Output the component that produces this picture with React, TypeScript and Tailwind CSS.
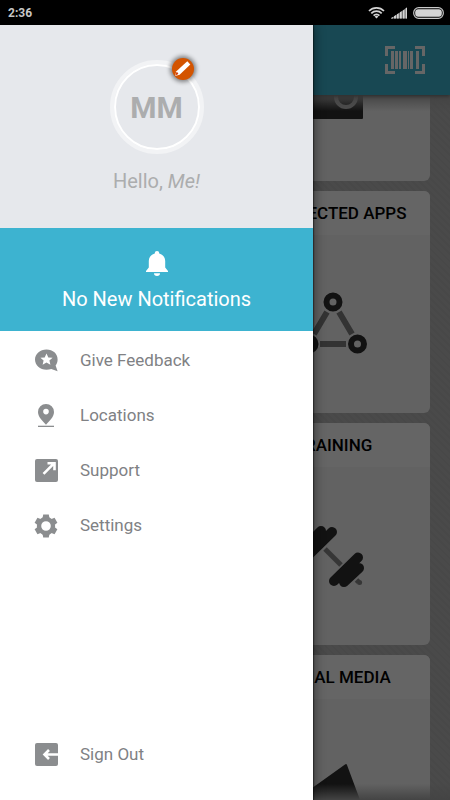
import type { ReactNode } from "react";

const gearTeeth = [0, 60, 120, 180, 240, 300];

const WifiIcon = () => (
  <svg width="17" height="13" viewBox="0 0 17 13" fill="none" stroke="#d4d4d4" strokeWidth="1.7">
    <path d="M1 5a10.5 10.5 0 0 1 15 0M3.3 7.4a7.2 7.2 0 0 1 10.4 0M5.6 9.6a4 4 0 0 1 5.8 0" />
    <path d="M8.5 12.6l-1.9-2a2.7 2.7 0 0 1 3.8 0z" fill="#d4d4d4" stroke="none" />
  </svg>
);

const SignalIcon = () => (
  <svg width="16" height="12" viewBox="0 0 16 12">
    <path d="M0 11.5L16 0.5v11z" fill="#777" />
    <path d="M0 11.5v-.5l2-1v1.5zM3 11.5V9.3l2-1.2v3.4zM6 11.5V7.3l1.7-1v5.2zM9 11.5V5.3l1.7-1v7.2zM12 11.5v-8l1.5-1v9zM14.7 11.5V1.3L16 .5v11z" fill="#d4d4d4" />
  </svg>
);

const BatteryIcon = () => (
  <svg width="31" height="12" viewBox="0 0 31 12">
    <rect x="0.7" y="0.7" width="29.6" height="10.6" rx="5" fill="none" stroke="#c8c8c8" strokeWidth="1.2" />
    <rect x="2.2" y="2.2" width="26.6" height="7.6" rx="3" fill="#d4d4d4" />
  </svg>
);

const BarcodeIcon = () => (
  <svg width="40" height="28" viewBox="0 0 40 28" fill="#fff">
    <path d="M0 0h10v3H3v7H0zM30 0h10v10h-3V3h-7zM0 18h3v7h7v3H0zM37 18h3v10H30v-3h7z" />
    <path d="M6 5h3v18H6zM10 5h3v18h-3zM14 5h2v18h-2zM18 5h4v18h-4zM23 5h1v18h-1zM25 5h3v18h-3zM31 5h3v18h-3z" />
  </svg>
);

const PencilIcon = () => (
  <svg width="22" height="22" viewBox="0 0 22 22">
    <path d="M4.4 13.2L15.3 3.3l3 3.3L7.6 16.8 3 18z" fill="#fff" />
    <path d="M4.2 14.2l1.6.2.5 1.6-3 1.8z" fill="#d3410c" />
  </svg>
);

const BellIcon = () => (
  <svg width="24" height="26" viewBox="0 0 24 26" fill="#fff">
    <path d="M12 1a2.2 2.2 0 0 1 2.2 2.4c3.5 1 6 4 6 7.6v6.6L23 21v1H1v-1l2.8-3.4V11c0-3.6 2.5-6.6 6-7.6A2.2 2.2 0 0 1 12 1z" />
    <path d="M9 23.2h6a3 2.8 0 0 1-6 0z" />
  </svg>
);

const FeedbackIcon = () => (
  <svg width="24" height="24" viewBox="0 0 24 24" fill="#8b8d8f">
    <path d="M12.5 0.5C19 0.5 23.6 4.8 23.6 10.4c0 2.3-.7 4.3-2 6l2 5.9-6.3-2.3c-1.5.6-3.1.8-4.8.8C6 20.8 1 16.200 1 10.6S6 .5 12.5.5z" />
    <path d="M12.5 4.4l1.800 4 4.300.4-3.200 2.800 1 4.200-3.900-2.200-3.900 2.200 1-4.200-3.200-2.800 4.300-.4z" fill="#fff" />
  </svg>
);

const PinIcon = () => (
  <svg width="24" height="24" viewBox="0 0 24 24" fill="#8b8d8f">
    <path fillRule="evenodd" d="M12 0a8 8 0 0 1 8 8c0 5-4.5 9-8 12.7C8.5 17 4 13 4 8a8 8 0 0 1 8-8zm0 4.8a2.800 2.800 0 1 0 0 5.600 2.800 2.800 0 0 0 0-5.600z" />
    <path d="M4 21.700h16V23H4z" />
  </svg>
);

const SupportIcon = () => (
  <svg width="24" height="24" viewBox="0 0 24 24">
    <rect x="1" y="0" width="23" height="23" rx="2" fill="#8b8d8f" />
    <path d="M9.500 14.800L20 4.300M13.500 4.300h7v7" fill="none" stroke="#fff" strokeWidth="2.600" />
  </svg>
);

const GearIcon = () => (
  <svg width="24" height="24" viewBox="-12 -12 24 24">
    {gearTeeth.map((angle) => (
      <path key={angle} d="M-2.800-11.500h5.600l.8 4.500h-7.200z" fill="#8b8d8f" transform={`rotate(${angle})`} />
    ))}
    <circle r="7" fill="none" stroke="#8b8d8f" strokeWidth="4.400" />
  </svg>
);

const SignOutIcon = () => (
  <svg width="24" height="24" viewBox="0 0 24 24">
    <rect x="1" y="0" width="23" height="23" rx="2" fill="#8b8d8f" />
    <path d="M24 11.500H10.500M15 7l-4.500 4.500L15 16" fill="none" stroke="#fff" strokeWidth="2.600" />
  </svg>
);

const CameraArt = () => (
  <svg width="65" height="64" viewBox="0 0 65 64">
    <rect x="3" y="5" width="59" height="54" rx="1" fill="#2e2e2e" />
    <circle cx="45" cy="37" r="10" fill="#2e2e2e" stroke="#c0c0c0" strokeWidth="4" />
  </svg>
);

const NetworkArt = () => (
  <svg width="65" height="64" viewBox="0 0 65 64" fill="none" overflow="visible">
    <path d="M38 20l13 22M26 20L13 42M19 52h26" stroke="#808080" strokeWidth="6" />
    <g stroke="#2e2e2e" strokeWidth="6">
      <circle cx="32" cy="10" r="6.500" />
      <circle cx="56.500" cy="52" r="6.500" />
      <circle cx="8" cy="52" r="6.500" />
    </g>
  </svg>
);

const DumbbellArt = () => (
  <svg width="65" height="64" viewBox="0 0 65 64" fill="none">
    <path d="M24 25l16 16" stroke="#888" strokeWidth="5" />
    <path d="M55.500 56l2 2" stroke="#888" strokeWidth="5" />
    <path d="M58.500 58.500h.1" stroke="#888" strokeWidth="5" strokeLinecap="round" />
    <g stroke="#2e2e2e" strokeWidth="10" strokeLinecap="round">
      <path d="M33 57l24-23.500M43 58l15-14" />
      <path d="M31 8L7 31.500M20 7L6 21" />
    </g>
    <path d="M37 55l18-17 2 6-14 13zM27 10L8 29V20L20 9z" fill="#2e2e2e" />
  </svg>
);

const MegaphoneArt = () => (
  <svg width="65" height="64" viewBox="0 0 65 64">
    <path d="M44 8.500q1.500-1 2 .5L65 60H0V40z" fill="#2e2e2e" />
  </svg>
);

const cards = [
  { id: "camera", title: "", art: <CameraArt /> },
  { id: "apps", title: "CONNECTED APPS", art: <NetworkArt /> },
  { id: "training", title: "TRAINING", art: <DumbbellArt /> },
  { id: "social", title: "SOCIAL MEDIA", art: <MegaphoneArt /> },
];

const menu = [
  { label: "Give Feedback", icon: <FeedbackIcon /> },
  { label: "Locations", icon: <PinIcon /> },
  { label: "Support", icon: <SupportIcon /> },
  { label: "Settings", icon: <GearIcon /> },
];

function MenuLink({ icon, label }: { icon: ReactNode; label: string }) {
  return (
    <a href="#" className="flex h-[55px] items-center gap-[22px] pl-[34px] text-[17px] text-[#808184]">
      {icon}
      {label}
    </a>
  );
}

export default function App() {
  return (
    <div className="flex h-screen flex-col overflow-hidden bg-black font-['Roboto',sans-serif]">
      {/* Status bar */}
      <div className="flex h-[25px] shrink-0 items-center justify-between bg-black pl-2 pr-[6px]">
        <span className="text-[12px] font-bold text-[#c8c8c8]">2:36</span>
        <div className="flex items-center gap-[6px]">
          <WifiIcon />
          <SignalIcon />
          <BatteryIcon />
        </div>
      </div>

      <div className="relative flex min-h-0 flex-1 flex-col">
        {/* Page under the drawer */}
        <header className="z-10 flex h-[70px] shrink-0 items-center justify-end bg-[#3db3d0] pr-[25px] shadow-[0_1px_4px_rgba(0,0,0,0.4)]">
          <button aria-label="Scan barcode">
            <BarcodeIcon />
          </button>
        </header>
        <main className="relative min-h-0 flex-1 overflow-hidden bg-[repeating-linear-gradient(45deg,#b8b8b8_0px,#b8b8b8_3px,#b4b4b4_3px,#b4b4b4_5px)]">
          {/* Scrolled part way down */}
          <div className="-mt-[136px] grid grid-cols-2 gap-x-6 gap-y-[10px] px-5">
            {cards.map((card) => (
              <button key={card.id} className="col-start-2 flex h-[222px] flex-col overflow-hidden rounded-md bg-[#f4f4f4]">
                <span className="flex h-11 w-full shrink-0 items-center justify-center whitespace-nowrap bg-[#fcfcfc] pt-0.5 text-[17px] font-medium text-black">
                  {card.title}
                </span>
                <span className="flex w-full flex-1 items-center justify-center">{card.art}</span>
              </button>
            ))}
          </div>
          {/* Fading edges of the scroll area */}
          <div className="absolute inset-x-0 top-0 h-4 bg-gradient-to-b from-[#aaaaaa] to-transparent" />
          <div className="absolute inset-x-0 bottom-0 h-4 bg-gradient-to-b from-transparent to-[#aaaaaa]" />
        </main>

        {/* Scrim */}
        <div className="absolute inset-0 z-20 bg-black/60" />

        {/* Drawer */}
        <aside className="absolute inset-y-0 left-0 z-30 flex w-[313px] flex-col bg-white shadow-[1px_0_1px_rgba(0,0,0,0.4),2px_0_10px_rgba(0,0,0,0.4)]">
          <div className="flex flex-col items-center bg-[#e6e8ec] pb-[33px] pt-[35px]">
            <div className="relative flex size-[94px] items-center justify-center rounded-full border-4 border-[#f2f3f5]">
              <div className="flex size-full items-center justify-center rounded-full border-2 border-white text-[30px] font-bold text-[#acadae]">
                MM
              </div>
              <button
                aria-label="Edit profile"
                className="absolute right-[6px] -top-[6px] size-[22px] rounded-full bg-[#d35400] shadow-[0_0_4px_2px_rgba(0,0,0,0.45)]"
              >
                <PencilIcon />
              </button>
            </div>
            <p className="mt-[13px] text-[20px] leading-7 text-[#acadae]">
              Hello, <em>Me!</em>
            </p>
          </div>

          <button className="flex h-[103px] shrink-0 flex-col items-center bg-[#3db3d0] pt-[22px] text-[20px] leading-7 text-white">
            <BellIcon />
            <span className="mt-[9px]">No New Notifications</span>
          </button>

          <nav className="flex flex-1 flex-col pb-[18px] pt-0.5">
            {menu.map((item) => (
              <MenuLink key={item.label} {...item} />
            ))}
            <div className="mt-auto">
              <MenuLink icon={<SignOutIcon />} label="Sign Out" />
            </div>
          </nav>
        </aside>
      </div>
    </div>
  );
}
